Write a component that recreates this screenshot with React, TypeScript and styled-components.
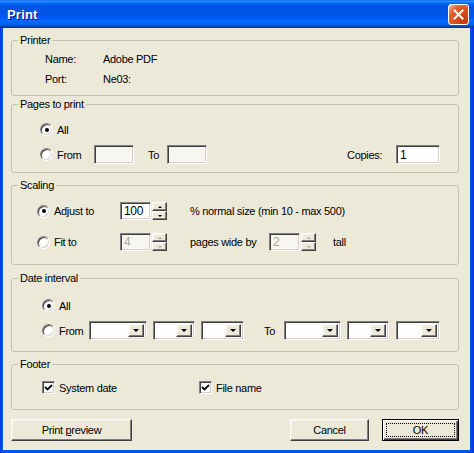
import React from "react";
import styled, { createGlobalStyle, css } from "styled-components";

const GlobalStyle = createGlobalStyle`
  html, body {
    margin: 0;
    padding: 0;
    background: #0054e3;
  }
  body {
    font-family: "Liberation Sans", Arial, sans-serif;
    font-size: 11px;
    letter-spacing: -0.3px;
    color: #000;
  }
`;

const sunken = css`
  border: 1px solid;
  border-color: #808080 #ffffff #ffffff #808080;
  box-shadow: inset 1px 1px 0 #404040, inset -1px -1px 0 #d4d0c8;
`;

const raised = css`
  border: 1px solid;
  border-color: #ffffff #404040 #404040 #ffffff;
  box-shadow: inset -1px -1px 0 #808080, inset 1px 1px 0 #f4f2e8;
  background: #ece9d8;
`;

const Window = styled.div`
  width: 474px;
  height: 453px;
  display: flex;
  flex-direction: column;
  background: linear-gradient(to right, #0831d9 0px, #0055ea 2px, #0055ea 470px, #0831d9 474px);
  box-sizing: border-box;
`;

const TitleBar = styled.div`
  height: 28px;
  flex-shrink: 0;
  display: flex;
  align-items: center;
  justify-content: space-between;
  padding: 0 5px 0 7px;
  background: linear-gradient(
    to bottom,
    #0058ee 0%,
    #3593ff 4%,
    #288eff 6%,
    #127dff 8%,
    #036ffc 10%,
    #0262ee 14%,
    #0057e5 20%,
    #0054e3 24%,
    #0055eb 56%,
    #005bf5 66%,
    #026afe 76%,
    #0062ef 86%,
    #0052d6 92%,
    #0040ab 96%,
    #003092 100%
  );
`;

const Title = styled.span`
  font-family: "Liberation Sans", Arial, sans-serif;
  font-weight: 700;
  font-size: 13px;
  color: #fff;
  text-shadow: 1px 1px 0 #0f1089;
  letter-spacing: 0.2px;
`;

const CloseButton = styled.div`
  width: 21px;
  height: 21px;
  box-sizing: border-box;
  border: 1px solid #fff;
  border-radius: 3px;
  display: flex;
  align-items: center;
  justify-content: center;
  background: radial-gradient(circle at 85% 85%, #c23a0e 0%, #d9511f 50%, #e0683a 72%, #f3a98a 92%, #fff 100%);
`;

const Body = styled.div`
  flex: 1;
  margin: 0 4px 3px 3px;
  background: #ece9d8;
  padding: 6px 11px 0 8px;
  display: flex;
  flex-direction: column;
`;

const GroupBox = styled.fieldset<{ $mt: number }>`
  margin: ${(p) => p.$mt}px 0 0;
  padding: 0;
  border: 1px solid #c5c2b2;
  border-radius: 3px;
  min-width: 0;
`;

const Legend = styled.legend`
  margin-left: 6px;
  padding: 0 2px;
  line-height: 13px;
  font-size: 11px;
`;

const InfoGrid = styled.div`
  display: grid;
  grid-template-columns: 58px auto;
  grid-auto-rows: 20px;
  align-items: center;
  padding: 2px 0 6px 33px;
`;

const Options = styled.div<{ $pt: number; $pb: number; $pl: number; $gap: number }>`
  display: flex;
  flex-direction: column;
  gap: ${(p) => p.$gap}px;
  padding: ${(p) => p.$pt}px 18px ${(p) => p.$pb}px ${(p) => p.$pl}px;
`;

const Row = styled.div<{ $h?: number }>`
  display: flex;
  align-items: center;
  height: ${(p) => p.$h ?? 19}px;
`;

const RadioCircle = styled.span<{ $checked?: boolean }>`
  width: 13px;
  height: 13px;
  box-sizing: border-box;
  border-radius: 50%;
  border: 1px solid;
  border-color: #808080 #ffffff #ffffff #808080;
  box-shadow: inset 1px 1px 0 #404040, inset -1px -1px 0 #d4d0c8;
  background: #fff;
  display: flex;
  align-items: center;
  justify-content: center;
  flex-shrink: 0;

  &::after {
    content: "";
    width: 4px;
    height: 4px;
    border-radius: 50%;
    background: ${(p) => (p.$checked ? "#000" : "transparent")};
  }
`;

const Label = styled.span<{ $w?: number; $ml?: number }>`
  white-space: nowrap;
  margin-left: ${(p) => p.$ml ?? 0}px;
  ${(p) => (p.$w !== undefined ? `width: ${p.$w}px; flex-shrink: 0;` : "")}
`;

const TextBox = styled.div<{ $w: number; $disabled?: boolean }>`
  ${sunken};
  width: ${(p) => p.$w}px;
  height: 19px;
  box-sizing: border-box;
  background: ${(p) => (p.$disabled ? "#f7f6f1" : "#fff")};
  color: ${(p) => (p.$disabled ? "#aca899" : "#000")};
  display: flex;
  align-items: center;
  padding-left: 3px;
  font-size: 12px;
  flex-shrink: 0;
`;

const Spacer = styled.div`
  flex: 1;
`;

const Spin = styled.div<{ $ml?: number }>`
  display: flex;
  align-items: stretch;
  height: 18px;
  margin-left: ${(p) => p.$ml ?? 0}px;
  flex-shrink: 0;
`;

const SpinField = styled.div<{ $disabled?: boolean }>`
  ${sunken};
  width: 31px;
  box-sizing: border-box;
  background: ${(p) => (p.$disabled ? "#f7f6f1" : "#fff")};
  color: ${(p) => (p.$disabled ? "#aca899" : "#000")};
  display: flex;
  align-items: center;
  padding-left: 3px;
  font-size: 12px;
`;

const SpinButtons = styled.div`
  display: flex;
  flex-direction: column;
  width: 15px;
  margin-left: 1px;
`;

const SpinButton = styled.div`
  ${raised};
  flex: 1;
  box-sizing: border-box;
  display: flex;
  align-items: center;
  justify-content: center;
`;

const Arrow = styled.span<{ $dir: "up" | "down"; $disabled?: boolean; $size?: number }>`
  width: 0;
  height: 0;
  border-left: ${(p) => p.$size ?? 2}px solid transparent;
  border-right: ${(p) => p.$size ?? 2}px solid transparent;
  ${(p) =>
    p.$dir === "up"
      ? `border-bottom: ${p.$size ?? 2}px solid ${p.$disabled ? "#aca899" : "#000"};`
      : `border-top: ${p.$size ?? 2}px solid ${p.$disabled ? "#aca899" : "#000"};`}
`;

const Combo = styled.div<{ $w: number; $ml?: number }>`
  ${sunken};
  width: ${(p) => p.$w}px;
  height: 19px;
  box-sizing: border-box;
  background: #fff;
  display: flex;
  justify-content: flex-end;
  padding: 2px;
  margin-left: ${(p) => p.$ml ?? 0}px;
  flex-shrink: 0;
`;

const ComboButton = styled.div`
  ${raised};
  width: 16px;
  box-sizing: border-box;
  display: flex;
  align-items: center;
  justify-content: center;
`;

const CheckBox = styled.span`
  ${sunken};
  width: 13px;
  height: 13px;
  box-sizing: border-box;
  background: #fff;
  display: flex;
  align-items: center;
  justify-content: center;
  flex-shrink: 0;
`;

const CheckItem = styled.div<{ $w?: number }>`
  display: flex;
  align-items: center;
  gap: 4px;
  ${(p) => (p.$w !== undefined ? `width: ${p.$w}px;` : "")}
`;

const ButtonBar = styled.div`
  display: flex;
  align-items: center;
  margin-top: 9px;
  gap: 13px;
`;

const Button = styled.div<{ $w: number; $default?: boolean }>`
  ${raised};
  width: ${(p) => p.$w}px;
  height: 22px;
  box-sizing: border-box;
  display: flex;
  align-items: center;
  justify-content: center;
  font-size: 11px;
  ${(p) =>
    p.$default &&
    css`
      border-color: #000;
      box-shadow: inset 1px 1px 0 #fff, inset -1px -1px 0 #404040, inset -2px -2px 0 #808080;
      position: relative;
      &::before {
        content: "";
        position: absolute;
        inset: 3px;
        border: 1px dotted #000;
      }
    `}
`;

const Mnemonic = styled.span`
  text-decoration: underline;
`;

const Radio: React.FC<{ checked?: boolean; label: string; labelWidth?: number }> = ({
  checked,
  label,
  labelWidth,
}) => (
  <>
    <RadioCircle $checked={checked} />
    <Label $ml={4} $w={labelWidth}>
      {label}
    </Label>
  </>
);

const SpinBox: React.FC<{ value: string; disabled?: boolean; ml?: number }> = ({ value, disabled, ml }) => (
  <Spin $ml={ml}>
    <SpinField $disabled={disabled}>{value}</SpinField>
    <SpinButtons>
      <SpinButton>
        <Arrow $dir="up" $disabled={disabled} />
      </SpinButton>
      <SpinButton>
        <Arrow $dir="down" $disabled={disabled} />
      </SpinButton>
    </SpinButtons>
  </Spin>
);

const DropDown: React.FC<{ w: number; ml?: number }> = ({ w, ml }) => (
  <Combo $w={w} $ml={ml}>
    <ComboButton>
      <Arrow $dir="down" $size={3} />
    </ComboButton>
  </Combo>
);

const Check: React.FC<{ label: string; w?: number }> = ({ label, w }) => (
  <CheckItem $w={w}>
    <CheckBox>
      <svg width="9" height="9" viewBox="0 0 9 9">
        <polyline points="1,4 3.5,6.5 8,2" fill="none" stroke="#000" strokeWidth="1.8" />
      </svg>
    </CheckBox>
    <span>{label}</span>
  </CheckItem>
);

const App: React.FC = () => {
  return (
    <>
      <GlobalStyle />
      <Window>
        <TitleBar>
          <Title>Print</Title>
          <CloseButton>
            <svg width="11" height="11" viewBox="0 0 11 11">
              <path d="M1.5 1.5 L9.5 9.5 M9.5 1.5 L1.5 9.5" stroke="#fff" strokeWidth="2" strokeLinecap="square" />
            </svg>
          </CloseButton>
        </TitleBar>
        <Body>
          <GroupBox $mt={0}>
            <Legend>Printer</Legend>
            <InfoGrid>
              <span>Name:</span>
              <span>Adobe PDF</span>
              <span>Port:</span>
              <span>Ne03:</span>
            </InfoGrid>
          </GroupBox>

          <GroupBox $mt={2}>
            <Legend>Pages to print</Legend>
            <Options $pt={9} $pb={8} $pl={28} $gap={6}>
              <Row>
                <Radio checked label="All" />
              </Row>
              <Row>
                <Radio label="From" labelWidth={37} />
                <TextBox $w={40} $disabled />
                <Label $ml={14} $w={19}>
                  To
                </Label>
                <TextBox $w={40} $disabled />
                <Spacer />
                <Label $w={49}>Copies:</Label>
                <TextBox $w={44}>1</TextBox>
              </Row>
            </Options>
          </GroupBox>

          <GroupBox $mt={6}>
            <Legend>Scaling</Legend>
            <Options $pt={10} $pb={13} $pl={25} $gap={13}>
              <Row $h={18}>
                <Radio checked label="Adjust to" labelWidth={66} />
                <SpinBox value="100" />
                <Label $ml={23}>% normal size (min 10 - max 500)</Label>
              </Row>
              <Row $h={18}>
                <Radio label="Fit to" labelWidth={66} />
                <SpinBox value="4" disabled />
                <Label $ml={23} $w={79}>
                  pages wide by
                </Label>
                <SpinBox value="2" disabled />
                <Label $ml={17}>tall</Label>
              </Row>
            </Options>
          </GroupBox>

          <GroupBox $mt={7}>
            <Legend>Date interval</Legend>
            <Options $pt={11} $pb={11} $pl={30} $gap={6}>
              <Row>
                <Radio checked label="All" />
              </Row>
              <Row>
                <Radio label="From" labelWidth={30} />
                <DropDown w={58} />
                <DropDown w={42} ml={6} />
                <DropDown w={43} ml={6} />
                <Label $ml={20} $w={20}>
                  To
                </Label>
                <DropDown w={57} />
                <DropDown w={42} ml={6} />
                <DropDown w={44} ml={7} />
              </Row>
            </Options>
          </GroupBox>

          <GroupBox $mt={6}>
            <Legend>Footer</Legend>
            <Options $pt={10} $pb={15} $pl={30} $gap={0}>
              <Row $h={13}>
                <Check label="System date" w={157} />
                <Check label="File name" />
              </Row>
            </Options>
          </GroupBox>

          <ButtonBar>
            <Button $w={121}>
              Print&nbsp;<Mnemonic>p</Mnemonic>review
            </Button>
            <Spacer />
            <Button $w={79}>Cancel</Button>
            <Button $w={77} $default>
              OK
            </Button>
          </ButtonBar>
        </Body>
      </Window>
    </>
  );
};

export default App;
